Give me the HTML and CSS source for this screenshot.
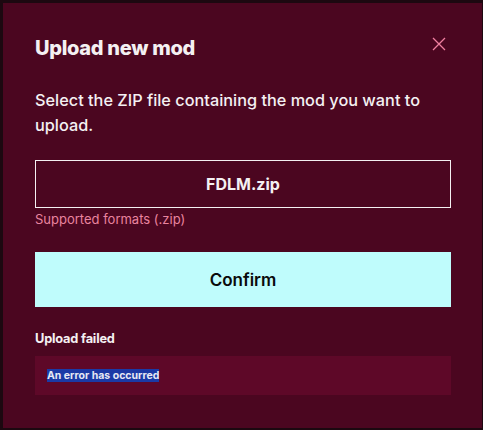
FILE: index.html
```html
<!DOCTYPE html>
<html>
<head>
<meta charset="utf-8">
<link rel="stylesheet" href="styles.css">
</head>
<body>
<div class="backdrop">
  <div class="dialog">
    <div class="header">
      <h1 class="title">Upload new mod</h1>
      <button class="close" aria-label="Close">
        <svg width="14" height="14" viewBox="0 0 14 14"><path d="M1 1L13 13M13 1L1 13" stroke="#f07fa0" stroke-width="1.3" fill="none"/></svg>
      </button>
    </div>
    <p class="desc">Select the ZIP file containing the mod you want to upload.</p>
    <div class="filebox">FDLM.zip</div>
    <div class="hint">Supported formats (.zip)</div>
    <button class="confirm">Confirm</button>
    <div class="err-title">Upload failed</div>
    <div class="err-box"><span class="sel">An error has occurred</span></div>
  </div>
</div>
</body>
</html>
```
FILE: styles.css
```css
html, body {
  margin: 0;
  padding: 0;
  background: #1c0810;
  font-family: Inter, "Noto Sans", sans-serif;
}
.backdrop {
  width: 483px;
  height: 430px;
  padding: 3px 1px 2px 3px;
  box-sizing: border-box;
}
.dialog {
  background: #4b0620;
  height: 100%;
  box-sizing: border-box;
  padding: 33px 31px 0 32px;
  color: #f4f0f2;
  display: flex;
  flex-direction: column;
}
.header {
  display: flex;
  justify-content: space-between;
  align-items: flex-start;
}
.title {
  margin: 0;
  font-size: 20px;
  line-height: 24px;
  font-weight: 800;
  letter-spacing: -0.3px;
}
.close {
  width: 24px;
  height: 24px;
  margin-top: -4px;
  padding: 0;
  border: 0;
  background: transparent;
  display: flex;
  align-items: center;
  justify-content: center;
}
.desc {
  margin: 28px 0 0;
  font-size: 16.3px;
  line-height: 25px;
  font-weight: 500;
  padding-right: 20px;
}
.filebox {
  margin-top: 22px;
  height: 48px;
  box-sizing: border-box;
  border: 1px solid #f4f0f2;
  display: flex;
  align-items: center;
  justify-content: center;
  font-size: 16px;
  font-weight: 700;
}
.hint {
  margin-top: 3px;
  font-size: 13px;
  line-height: 16px;
  color: #e9849f;
}
.confirm {
  margin-top: 25px;
  height: 55px;
  border: 0;
  background: #bffcfc;
  color: #0a0a0a;
  font-family: inherit;
  font-size: 17px;
  font-weight: 600;
}
.err-title {
  margin-top: 24px;
  font-size: 12.8px;
  line-height: 16px;
  font-weight: 700;
  letter-spacing: -0.2px;
}
.err-box {
  margin-top: 9px;
  height: 39px;
  box-sizing: border-box;
  background: #5e0828;
  padding: 12px 12px;
  font-size: 10.5px;
  line-height: 15px;
  font-weight: 700;
}
.sel {
  background: #1b3aa6;
  color: #e6e8f4;
}
```
